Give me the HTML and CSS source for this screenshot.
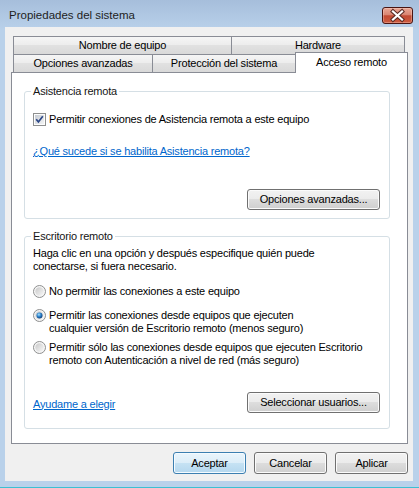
FILE: index.html
```html
<!DOCTYPE html>
<html lang="es">
<head>
<meta charset="utf-8">
<title>Propiedades del sistema</title>
<link rel="stylesheet" href="styles.css">
</head>
<body>
<svg class="defs" width="0" height="0" aria-hidden="true">
  <defs>
    <linearGradient id="cbg" x1="0" y1="0" x2="1" y2="1">
      <stop offset="0" stop-color="#c6cbd2"/>
      <stop offset="1" stop-color="#f4f5f6"/>
    </linearGradient>
    <linearGradient id="rg" x1="0" y1="0" x2="1" y2="1">
      <stop offset="0" stop-color="#c9c9c9"/>
      <stop offset="1" stop-color="#f7f7f7"/>
    </linearGradient>
    <radialGradient id="rd" cx="0.4" cy="0.35" r="0.7">
      <stop offset="0" stop-color="#a8e2ff"/>
      <stop offset="0.5" stop-color="#2b80c9"/>
      <stop offset="1" stop-color="#0d3873"/>
    </radialGradient>
  </defs>
</svg>
<div class="window">
  <div class="titlebar">
    <span class="title">Propiedades del sistema</span>
    <div class="close">
      <svg width="29" height="15" viewBox="0 0 29 15">
        <path d="M10 3.5 L19 11.5 M19 3.5 L10 11.5" stroke="#5a2a24" stroke-width="4.2" stroke-linecap="square" fill="none"/>
        <path d="M10 3.5 L19 11.5 M19 3.5 L10 11.5" stroke="#ffffff" stroke-width="2.2" stroke-linecap="square" fill="none"/>
      </svg>
    </div>
  </div>
  <div class="client">
    <div class="tabs">
      <div class="tabrow">
        <div class="tab t-nombre">Nombre de equipo</div>
        <div class="tab t-hw">Hardware</div>
      </div>
      <div class="tabrow">
        <div class="tab t-opc">Opciones avanzadas</div>
        <div class="tab t-prot">Protección del sistema</div>
        <div class="tab active t-acc">Acceso remoto</div>
      </div>
    </div>
    <div class="panel">
      <div class="group g1">
        <div class="legend">Asistencia remota</div>
        <div class="opt check-row">
          <svg class="ctl" width="13" height="13" viewBox="0 0 13 13">
            <rect x="0.5" y="0.5" width="12" height="12" fill="#fdfdfd" stroke="#8e8f8f"/>
            <rect x="2" y="2" width="9" height="9" fill="url(#cbg)"/>
            <path d="M3.2 6.3 L5.4 8.9 L9.8 3.2" fill="none" stroke="#2c4787" stroke-width="1.7"/>
          </svg>
          <span>Permitir conexiones de Asistencia remota a este equipo</span>
        </div>
        <div class="link-line l1"><a class="link">¿Qué sucede si se habilita Asistencia remota?</a></div>
        <div class="btn-row r1"><div class="btn btn-wide">Opciones avanzadas...</div></div>
      </div>
      <div class="group g2">
        <div class="legend">Escritorio remoto</div>
        <p class="intro">Haga clic en una opción y después especifique quién puede<br>conectarse, si fuera necesario.</p>
        <div class="opt radio1">
          <svg class="ctl" width="13" height="13" viewBox="0 0 13 13">
            <circle cx="6.5" cy="6.5" r="6" fill="#f5f5f5" stroke="#8e8f8f"/>
            <circle cx="6.5" cy="6.5" r="4.2" fill="url(#rg)"/>
          </svg>
          <span>No permitir las conexiones a este equipo</span>
        </div>
        <div class="opt radio2">
          <svg class="ctl" width="13" height="13" viewBox="0 0 13 13">
            <circle cx="6.5" cy="6.5" r="6" fill="#f5f5f5" stroke="#8e8f8f"/>
            <circle cx="6.5" cy="6.5" r="4.2" fill="url(#rg)"/>
            <circle cx="6.5" cy="6.5" r="3" fill="url(#rd)"/>
          </svg>
          <span>Permitir las conexiones desde equipos que ejecuten<br>cualquier versión de Escritorio remoto (menos seguro)</span>
        </div>
        <div class="opt radio3">
          <svg class="ctl" width="13" height="13" viewBox="0 0 13 13">
            <circle cx="6.5" cy="6.5" r="6" fill="#f5f5f5" stroke="#8e8f8f"/>
            <circle cx="6.5" cy="6.5" r="4.2" fill="url(#rg)"/>
          </svg>
          <span>Permitir sólo las conexiones desde equipos que ejecuten Escritorio<br>remoto con Autenticación a nivel de red (más seguro)</span>
        </div>
        <div class="btn-row r2">
          <a class="link help">Ayudame a elegir</a>
          <div class="btn btn-wide">Seleccionar usuarios...</div>
        </div>
      </div>
    </div>
    <div class="actions">
      <div class="btn btn-small default">Aceptar</div>
      <div class="btn btn-small">Cancelar</div>
      <div class="btn btn-small">Aplicar</div>
    </div>
  </div>
</div>
</body>
</html>
```
FILE: styles.css
```css
* {
  box-sizing: border-box;
}

html, body {
  margin: 0;
  padding: 0;
}

body {
  font-family: "Liberation Sans", Arial, sans-serif;
  font-size: 11px;
  letter-spacing: -0.2px;
  color: #000;
  background: #b9d1ea;
}

.defs {
  position: absolute;
  width: 0;
  height: 0;
}

.window {
  width: 419px;
  height: 488px;
  background: linear-gradient(#a6bedb 0, #b9d1ea 30px);
  border-bottom: 1px solid #3cc0d2;
  padding: 0 6px 6px 5px;
  display: flex;
  flex-direction: column;
}

.titlebar {
  height: 27px;
  flex: none;
  display: flex;
  justify-content: space-between;
  align-items: flex-start;
  padding: 7px 0 0 4px;
}

.title {
  font-size: 11.5px;
  letter-spacing: 0;
  line-height: 17px;
  color: #1e1e1e;
}

.close {
  width: 31px;
  height: 17px;
  border: 1px solid #4a1512;
  border-radius: 3px;
  background: linear-gradient(#e9a796 0, #d98572 45%, #c24a33 52%, #cd5b3f 100%);
  box-shadow: inset 0 0 0 1px rgba(255, 220, 210, 0.35);
  display: flex;
  align-items: center;
  justify-content: center;
}

.close svg {
  display: block;
}

.client {
  background: #f0f0f0;
  height: 454px;
  flex: none;
  padding: 9px 5px 7px 6px;
  display: flex;
  flex-direction: column;
}

.tabs {
  height: 36px;
  flex: none;
  display: flex;
  flex-direction: column;
  padding-left: 2px;
}

.tabrow {
  display: flex;
  height: 18px;
}

.tab {
  height: 18px;
  border: 1px solid #898c95;
  border-bottom: 0;
  background: linear-gradient(#f5f5f5 0, #ececec 50%, #e1e1e1 50%, #d9d9d9 100%);
  display: flex;
  align-items: center;
  justify-content: center;
  line-height: 13px;
  white-space: nowrap;
}

.tab + .tab {
  margin-left: -1px;
}

.t-nombre { width: 219px; }
.t-hw { width: 174px; }
.t-opc { width: 140px; }
.t-prot { width: 144px; }
.t-acc { width: 113px; }

.tab.active {
  height: 21px;
  margin-top: -2px;
  background: #fff;
  position: relative;
  z-index: 1;
  padding-bottom: 1px;
}

.panel {
  flex: none;
  background: #fff;
  border: 1px solid #898c95;
  padding: 18px 17px 14px 12px;
}

.group {
  border: 1px solid #d5dfe5;
  border-radius: 3px;
  padding: 0 9px 0 8px;
  line-height: 13px;
}

.g1 {
  padding-bottom: 8px;
}

.g2 {
  margin-top: 17px;
  padding-bottom: 15px;
}

.legend {
  width: fit-content;
  margin: -7px 0 0 -2px;
  padding: 0 2px;
  background: #fff;
  color: #151515;
  line-height: 13px;
}

.opt {
  display: flex;
  align-items: flex-start;
  gap: 3px;
  line-height: 13px;
}

.ctl {
  flex: none;
  display: block;
}

.check-row {
  margin-top: 15px;
}

.link-line {
  margin-top: 19px;
  line-height: 13px;
}

.link {
  color: #0066cc;
  text-decoration: underline;
}

.btn-row {
  display: flex;
  justify-content: flex-end;
  align-items: center;
}

.r1 {
  margin-top: 31px;
}

.r2 {
  margin-top: 25px;
  justify-content: space-between;
}

.help {
  margin-top: 3px;
}

.intro {
  margin: 4px 0 0 0;
  line-height: 13px;
}

.radio1 { margin-top: 12px; }
.radio2 { margin-top: 11px; }
.radio3 { margin-top: 6px; }

.btn {
  border: 1px solid #707070;
  border-radius: 3px;
  background: linear-gradient(#f2f2f2 0, #ebebeb 50%, #dddddd 50%, #cfcfcf 100%);
  box-shadow: inset 0 0 0 1px #fbfbfb;
  display: flex;
  align-items: center;
  justify-content: center;
  white-space: nowrap;
  color: #000;
}

.btn-wide {
  width: 133px;
  height: 21px;
}

.actions {
  margin-top: 8px;
  display: flex;
  justify-content: flex-end;
  gap: 8px;
}

.btn-small {
  width: 73px;
  height: 22px;
}

.btn.default {
  border-color: #3c7fb1;
  background: linear-gradient(#eaf5fc 0, #dcedf8 50%, #c6e2f3 50%, #b4d7ee 100%);
  box-shadow: inset 0 0 0 1px #f4fbff;
}
```
